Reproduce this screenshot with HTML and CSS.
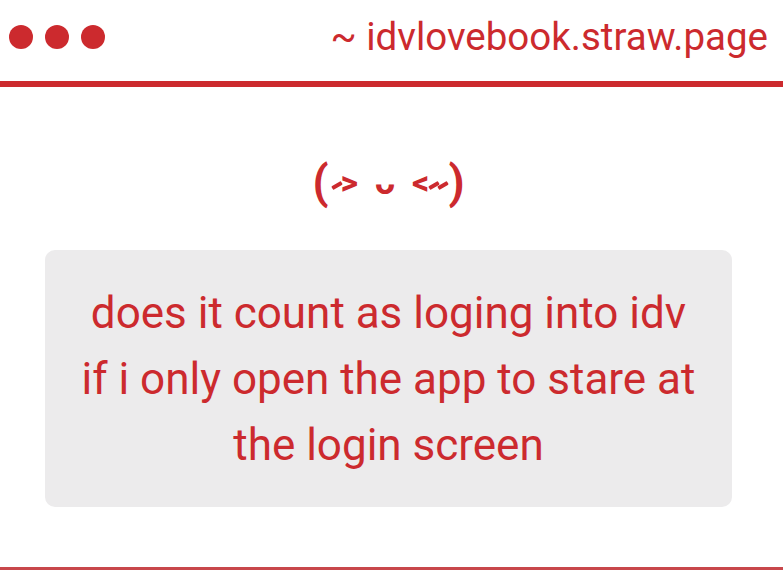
FILE: index.html
```html
<!DOCTYPE html>
<html>
<head>
	<meta charset="utf-8">
	<title>idvlovebook</title>
	<link rel="stylesheet" href="styles.css">
</head>
<body>
	<div class="window">
		<div class="titlebar">
			<div class="dots">
				<span class="dot"></span>
				<span class="dot"></span>
				<span class="dot"></span>
			</div>
			<div class="address">~ idvlovebook.straw.page</div>
		</div>

		<div class="content">
			<div class="face">(<span class="eyes"><i class="blush"></i>&gt; ᴗ &lt;<i class="blush"></i><i class="blush"></i></span>)</div>
			<div class="note">
				does it count as loging into idv<br>
				if i only open the app to stare at<br>
				the login screen
			</div>
		</div>

		<div class="footer"></div>
	</div>
</body>
</html>
```

FILE: styles.css
```css
html, body {
	margin: 0;
	padding: 0;
	background-color: #fff;
}

body {
	font-family: Roboto, "Noto Sans", sans-serif;
	color: #cc2a2e;
}

.window {
	height: 570px;
	display: flex;
	flex-direction: column;
}

/* top bar with the three dots and the address */
.titlebar {
	display: flex;
	align-items: center;
	justify-content: space-between;
	box-sizing: border-box;
	height: 87px;
	padding: 0 15px 8px 9px;
	border-bottom: 6px solid #cc2a2e;
}

.dots {
	display: flex;
	gap: 12px;
}

.dot {
	width: 24px;
	height: 24px;
	border-radius: 50%;
	background-color: #cc2a2e;
}

.address {
	font-size: 38.5px;
}

.content {
	flex: 1;
	padding: 0 51px 0 45px;
}

.face {
	text-align: center;
	font-size: 46px;
	font-weight: bold;
	margin-top: 70px;
	height: 93px;
	line-height: 50px;
}

.face .eyes {
	font-size: 34px;
	word-spacing: 8px;
	padding: 0 1px 0 3px;
	vertical-align: 4px;
}

/* little slanted blush marks */
.face .blush {
	display: inline-block;
	width: 4px;
	height: 11px;
	margin: 0 2px 0 3px;
	background-color: currentColor;
	border-radius: 1px;
	transform: rotate(60deg);
	vertical-align: 3px;
}

.note {
	background-color: #ecebec;
	border-radius: 10px;
	text-align: center;
	font-size: 44px;
	line-height: 66px;
	padding: 30px 0 29px;
}

.footer {
	border-top: 3px solid #c8474b;
}
```
